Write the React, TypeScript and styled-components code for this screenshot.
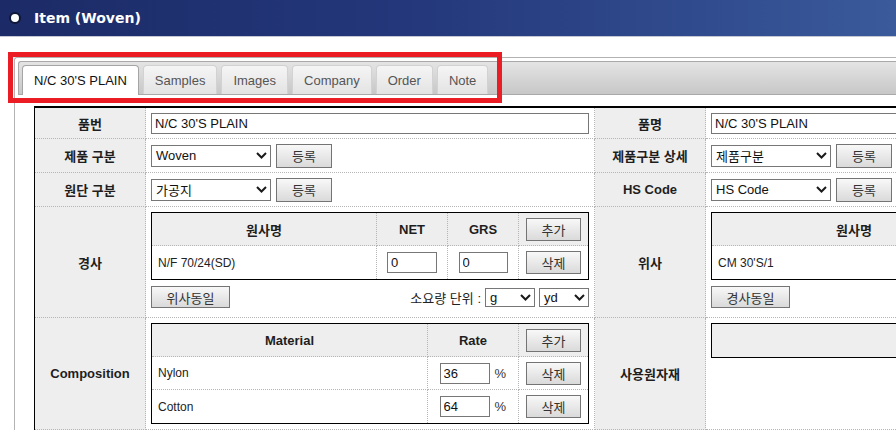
import React from 'react';
import styled, { createGlobalStyle } from 'styled-components';

//styles
const GlobalStyle = createGlobalStyle`
  html, body {
    margin: 0;
    padding: 0;
    background: #fff;
  }
  body {
    width: 896px;
    height: 430px;
    overflow: hidden;
    font-family: "Liberation Sans", "Noto Sans CJK KR", sans-serif;
    font-size: 13px;
    color: #222;
  }
`;

const Page = styled.div`
  position: relative;
  width: 896px;
  height: 430px;
  overflow: hidden;
`;

const TitleBar = styled.div`
  box-sizing: border-box;
  height: 37px;
  display: flex;
  align-items: center;
  gap: 13px;
  padding-left: 9px;
  background: linear-gradient(90deg, #1c2b67 0%, #23377a 45%, #3a5a9b 100%);
  border-bottom: 1px solid #c3c7d2;
`;

const Bullet = styled.span`
  box-sizing: border-box;
  width: 12px;
  height: 12px;
  border-radius: 50%;
  background: #fff;
  border: 2px solid #0f1738;
`;

const Title = styled.h1`
  margin: 0;
  font-family: "DejaVu Sans", sans-serif;
  font-size: 14px;
  font-weight: bold;
  color: #fff;
`;

const Panel = styled.div`
  width: 1300px;
  margin: 20px 0 0 14px;
  padding: 3px 0 0 3px;
  border-top: 1px solid #b3b3b3;
  border-left: 1px solid #b3b3b3;
  border-top-left-radius: 3px;
`;

const TabBar = styled.div`
  box-sizing: border-box;
  height: 34px;
  display: flex;
  align-items: flex-end;
  gap: 4px;
  padding-left: 3px;
  border: 1px solid #a9a9a9;
  border-right: none;
  border-top-left-radius: 3px;
  background: linear-gradient(#e4e4e4, #c7c7c7);
`;

const Tab = styled.div<{ $active?: boolean }>`
  box-sizing: border-box;
  height: ${(p) => (p.$active ? '30px' : '29px')};
  margin-bottom: ${(p) => (p.$active ? '-1px' : '0')};
  padding: 0 11px;
  display: flex;
  align-items: center;
  border: 1px solid ${(p) => (p.$active ? '#a5a5a5' : '#d2d2d2')};
  border-bottom: none;
  border-radius: 4px 4px 0 0;
  background: ${(p) => (p.$active ? '#fff' : 'linear-gradient(#f5f5f5, #e3e3e3)')};
  color: ${(p) => (p.$active ? '#111' : '#555')};
  font-size: 13px;
  white-space: nowrap;
`;

const Content = styled.div`
  padding: 11px 0 0 16px;
`;

const FormGrid = styled.div`
  display: grid;
  grid-template-columns: 111px 449px 111px 560px;
  grid-template-rows: 31px 34px 34px 111px 112px;
  border-top: 2px solid #000;
  border-left: 1px solid #000;
  width: max-content;
`;

const cellBorder = `
  box-sizing: border-box;
  border-right: 1px dotted #b5b5b5;
  border-bottom: 1px dotted #b5b5b5;
`;

const LabelCell = styled.div`
  ${cellBorder}
  display: flex;
  align-items: center;
  justify-content: center;
  background: #eeeeee;
  font-weight: bold;
  font-size: 13px;
  color: #1e1e1e;
  white-space: pre;
`;

const ValueCell = styled.div<{ $stack?: boolean }>`
  ${cellBorder}
  display: flex;
  flex-direction: ${(p) => (p.$stack ? 'column' : 'row')};
  align-items: ${(p) => (p.$stack ? 'flex-start' : 'center')};
  gap: ${(p) => (p.$stack ? '6px' : '5px')};
  padding: ${(p) => (p.$stack ? '5px 5px 0' : '0 5px')};
`;

const TextInput = styled.input<{ $w: number; $h?: number }>`
  box-sizing: border-box;
  width: ${(p) => p.$w}px;
  height: ${(p) => p.$h ?? 21}px;
  margin: 0;
  padding: 0 3px;
  border: 1px solid #777;
  border-radius: 0;
  font-family: "Liberation Sans", "Noto Sans CJK KR", sans-serif;
  font-size: 13px;
  color: #111;
  outline: none;
`;

const SelectBox = styled.div<{ $w: number; $h?: number }>`
  box-sizing: border-box;
  width: ${(p) => p.$w}px;
  height: ${(p) => p.$h ?? 22}px;
  display: flex;
  align-items: center;
  justify-content: space-between;
  padding: 0 3px 0 4px;
  border: 1px solid #777;
  background: #fff;
  font-size: 13px;
  color: #111;
`;

const Button = styled.button<{ $w: number; $h?: number }>`
  box-sizing: border-box;
  width: ${(p) => p.$w}px;
  height: ${(p) => p.$h ?? 23}px;
  margin: 0;
  padding: 0;
  border: 1px solid #747474;
  border-radius: 0;
  background: linear-gradient(#f8f8f8, #dadada);
  font-family: "Noto Sans CJK KR", sans-serif;
  font-size: 13px;
  color: #333;
  display: flex;
  align-items: center;
  justify-content: center;
  flex-shrink: 0;
`;

const SubTable = styled.div<{ $cols: string }>`
  display: grid;
  grid-template-columns: ${(p) => p.$cols};
  grid-auto-rows: 33px;
  border: 1px solid #000;
  width: max-content;
`;

const SubHead = styled.div<{ $end?: boolean }>`
  box-sizing: border-box;
  display: flex;
  align-items: center;
  justify-content: center;
  background: #eeeeee;
  font-weight: bold;
  font-size: 13px;
  color: #1e1e1e;
  border-bottom: 1px dotted #b5b5b5;
  border-right: ${(p) => (p.$end ? 'none' : '1px dotted #b5b5b5')};
`;

const SubCell = styled.div<{ $end?: boolean; $last?: boolean; $left?: boolean }>`
  box-sizing: border-box;
  display: flex;
  align-items: center;
  justify-content: ${(p) => (p.$left ? 'flex-start' : 'center')};
  gap: 5px;
  padding: ${(p) => (p.$left ? '0 6px' : '0')};
  font-size: 12px;
  color: #222;
  border-bottom: ${(p) => (p.$last ? 'none' : '1px dotted #b5b5b5')};
  border-right: ${(p) => (p.$end ? 'none' : '1px dotted #b5b5b5')};
`;

const EmptyBar = styled.div`
  box-sizing: border-box;
  width: 438px;
  height: 35px;
  border: 1px solid #000;
  background: #eeeeee;
`;

const ActionRow = styled.div`
  width: 438px;
  display: flex;
  align-items: center;
  justify-content: space-between;
`;

const UnitGroup = styled.div`
  display: flex;
  align-items: center;
  gap: 4px;
  font-size: 13px;
  color: #222;
`;

const Percent = styled.span`
  font-size: 13px;
  color: #333;
  width: 12px;
`;

const RedFrame = styled.div`
  position: absolute;
  left: 8px;
  top: 52px;
  width: 494px;
  height: 51px;
  box-sizing: border-box;
  border: 5px solid #ec1c24;
  pointer-events: none;
`;

//parts
const Chevron = () => (
  <svg width="11" height="7" viewBox="0 0 11 7">
    <path d="M1 1 L5.5 5.5 L10 1" fill="none" stroke="#1a1a1a" strokeWidth="2" />
  </svg>
);

const Select: React.FC<{ w: number; h?: number; value: string }> = ({ w, h, value }) => (
  <SelectBox $w={w} $h={h}>
    <span>{value}</span>
    <Chevron />
  </SelectBox>
);

const YARN_COLS = '225px 71px 71px 69px';
const COMP_COLS = '276px 91px 69px';

const tabs = ["N/C 30'S PLAIN", 'Samples', 'Images', 'Company', 'Order', 'Note'];

const compositions = [
  { name: 'Nylon', rate: '36' },
  { name: 'Cotton', rate: '64' },
];

// warp table: full width, all columns visible
const YarnTable: React.FC<{ yarn: string }> = ({ yarn }) => (
  <SubTable $cols={YARN_COLS}>
    <SubHead>원사명</SubHead>
    <SubHead>NET</SubHead>
    <SubHead>GRS</SubHead>
    <SubHead $end>
      <Button $w={55} $h={23}>추가</Button>
    </SubHead>
    <SubCell $left $last>{yarn}</SubCell>
    <SubCell $last>
      <TextInput $w={50} readOnly value="0" />
    </SubCell>
    <SubCell $last>
      <TextInput $w={49} readOnly value="0" />
    </SubCell>
    <SubCell $last $end>
      <Button $w={55} $h={23}>삭제</Button>
    </SubCell>
  </SubTable>
);

// weft table runs past the window edge, only the yarn column shows
const WeftTable: React.FC<{ yarn: string }> = ({ yarn }) => (
  <SubTable $cols="284px">
    <SubHead $end>원사명</SubHead>
    <SubCell $left $last $end>{yarn}</SubCell>
  </SubTable>
);

//component definition
const App: React.FC = () => {
  return (
    <Page>
      <GlobalStyle />
      <TitleBar>
        <Bullet />
        <Title>Item (Woven)</Title>
      </TitleBar>

      <Panel>
        <TabBar>
          {tabs.map((t, i) => (
            <Tab key={t} $active={i === 0}>
              {t}
            </Tab>
          ))}
        </TabBar>

        <Content>
          <FormGrid>
            <LabelCell>품번</LabelCell>
            <ValueCell>
              <TextInput $w={438} readOnly value="N/C 30'S PLAIN" />
            </ValueCell>
            <LabelCell>품명</LabelCell>
            <ValueCell>
              <TextInput $w={438} readOnly value="N/C 30'S PLAIN" />
            </ValueCell>

            <LabelCell>제품 구분</LabelCell>
            <ValueCell>
              <Select w={120} value="Woven" />
              <Button $w={56} $h={24}>등록</Button>
            </ValueCell>
            <LabelCell>제품구분 상세</LabelCell>
            <ValueCell>
              <Select w={120} value="제품구분" />
              <Button $w={56} $h={24}>등록</Button>
            </ValueCell>

            <LabelCell>원단 구분</LabelCell>
            <ValueCell>
              <Select w={120} value="가공지" />
              <Button $w={56} $h={24}>등록</Button>
            </ValueCell>
            <LabelCell>HS Code</LabelCell>
            <ValueCell>
              <Select w={120} value="HS Code" />
              <Button $w={56} $h={24}>등록</Button>
            </ValueCell>

            <LabelCell>경사</LabelCell>
            <ValueCell $stack>
              <YarnTable yarn="N/F 70/24(SD)" />
              <ActionRow>
                <Button $w={79} $h={22}>위사동일</Button>
                <UnitGroup>
                  <span>소요량 단위 :</span>
                  <Select w={50} h={19} value="g" />
                  <Select w={50} h={19} value="yd" />
                </UnitGroup>
              </ActionRow>
            </ValueCell>
            <LabelCell>위사</LabelCell>
            <ValueCell $stack>
              <WeftTable yarn="CM 30'S/1" />
              <Button $w={79} $h={22}>경사동일</Button>
            </ValueCell>

            <LabelCell>Composition</LabelCell>
            <ValueCell $stack>
              <SubTable $cols={COMP_COLS}>
                <SubHead>Material</SubHead>
                <SubHead>Rate</SubHead>
                <SubHead $end>
                  <Button $w={55} $h={23}>추가</Button>
                </SubHead>
                {compositions.map((c, i) => {
                  const last = i === compositions.length - 1;
                  return (
                    <React.Fragment key={c.name}>
                      <SubCell $left $last={last}>{c.name}</SubCell>
                      <SubCell $last={last}>
                        <TextInput $w={50} readOnly value={c.rate} />
                        <Percent>%</Percent>
                      </SubCell>
                      <SubCell $last={last} $end>
                        <Button $w={55} $h={23}>삭제</Button>
                      </SubCell>
                    </React.Fragment>
                  );
                })}
              </SubTable>
            </ValueCell>
            <LabelCell>사용원자재</LabelCell>
            <ValueCell $stack>
              <EmptyBar />
            </ValueCell>
          </FormGrid>
        </Content>
      </Panel>

      <RedFrame />
    </Page>
  );
};

export default App;
